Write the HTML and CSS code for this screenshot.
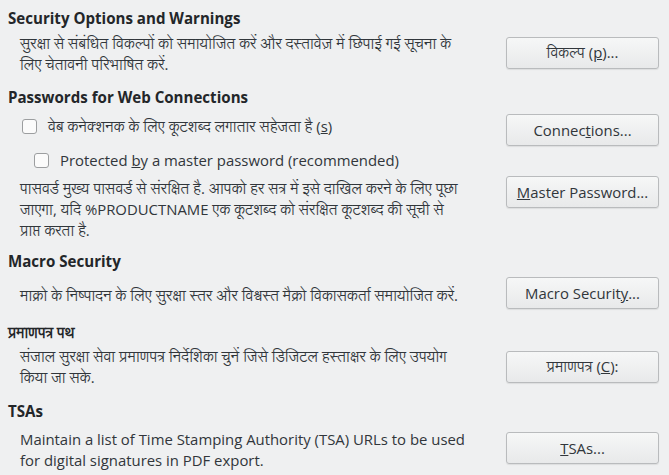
FILE: index.html
```html
<!DOCTYPE html>
<html lang="hi">
<head>
<meta charset="utf-8">
<link rel="stylesheet" href="styles.css">
</head>
<body>
<div class="page">
  <div class="heading h-first">Security Options and Warnings</div>
  <div class="row row-sec">
    <div class="desc">सुरक्षा से संबंधित विकल्पों को समायोजित करें और दस्तावेज़ में छिपाई गई सूचना के<br>लिए चेतावनी परिभाषित करें.</div>
    <button class="btn btn-sec">विकल्प (<u>p</u>)...</button>
  </div>

  <div class="heading h-pass">Passwords for Web Connections</div>
  <div class="row row-check1">
    <label class="check check-1"><span class="box"></span><span class="check-text">वेब कनेक्शनक के लिए कूटशब्द लगातार सहेजता है (<u>s</u>)</span></label>
    <button class="btn">Connec<u>t</u>ions...</button>
  </div>
  <div class="row row-check2">
    <label class="check check-2"><span class="box"></span><span class="check-text">Protected <u>b</u>y a master password (recommended)</span></label>
  </div>
  <div class="row row-master">
    <div class="desc desc-master">पासवर्ड मुख्य पासवर्ड से संरक्षित है. आपको हर सत्र में इसे दाखिल करने के लिए पूछा<br>जाएगा, यदि %PRODUCTNAME एक कूटशब्द को संरक्षित कूटशब्द की सूची से<br>प्राप्त करता है.</div>
    <button class="btn"><u>M</u>aster Password...</button>
  </div>

  <div class="heading h-macro">Macro Security</div>
  <div class="row row-macro">
    <div class="desc desc-macro">माक्रो के निष्पादन के लिए सुरक्षा स्तर और विश्वस्त मैक्रो विकासकर्ता समायोजित करें.</div>
    <button class="btn">Macro Securit<u>y</u>...</button>
  </div>

  <div class="heading heading-hi h-cert">प्रमाणपत्र पथ</div>
  <div class="row row-cert">
    <div class="desc">संजाल सुरक्षा सेवा प्रमाणपत्र निर्देशिका चुनें जिसे डिजिटल हस्ताक्षर के लिए उपयोग<br>किया जा सके.</div>
    <button class="btn">प्रमाणपत्र (<u>C</u>):</button>
  </div>

  <div class="heading h-tsa">TSAs</div>
  <div class="row row-tsa">
    <div class="desc desc-tsa">Maintain a list of Time Stamping Authority (TSA) URLs to be used<br>for digital signatures in PDF export.</div>
    <button class="btn"><u>T</u>SAs...</button>
  </div>
</div>
</body>
</html>
```

FILE: styles.css
```css
html, body {
  margin: 0;
  padding: 0;
  background: #eff0f1;
}
body {
  font-family: "Open Sans", "Lohit Devanagari", "Noto Sans Devanagari", sans-serif;
  font-size: 14.9px;
  color: #31363b;
  width: 669px;
  height: 475px;
  overflow: hidden;
}
.page {
  padding-top: 8px;
  display: flex;
  flex-direction: column;
}
.heading {
  margin-left: 8px;
  font-weight: bold;
  font-size: 15.1px;
  line-height: 20px;
  height: 20px;
  color: #232629;
}
.heading-hi {
  font-size: 14.67px;
}
.h-first { margin-top: 0; }
.h-pass { margin-top: 12px; }
.h-macro { margin-top: 10px; }
.h-cert { margin-top: 13px; }
.h-tsa { margin-top: 13px; }

.row {
  display: flex;
  align-items: center;
  justify-content: space-between;
  padding-left: 20px;
  padding-right: 10px;
}
.desc {
  line-height: 21px;
  white-space: nowrap;
}
.btn {
  flex: none;
  width: 153px;
  height: 32px;
  margin: 0;
  padding: 0;
  border: 1px solid #b9bbbd;
  border-radius: 3px;
  background: linear-gradient(#f6f7f7, #e8e9ea);
  box-shadow: 0 1px 1px rgba(0,0,0,0.08);
  font-family: inherit;
  font-size: 14.9px;
  color: #31363b;
  text-align: center;
}
.row-sec { margin-top: 5px; align-items: flex-start; }
.btn-sec { margin-top: 4px; }

.row-check1 { margin-top: 6px; height: 33px; }
.row-check1 .check { padding-bottom: 6px; }
.row-check2 { margin-top: 4px; height: 21px; }
.check {
  display: flex;
  align-items: center;
  line-height: 21px;
}
.check-1 { margin-left: 2px; }
.check-2 { margin-left: 14px; }
.box {
  width: 13px;
  height: 13px;
  border: 1px solid #9c9ea0;
  border-radius: 3px;
  background: #fbfbfb;
  margin-right: 11px;
}
.check-text { white-space: nowrap; }

.row-master { margin-top: 5px; align-items: flex-start; }
.desc-master { padding-top: 2px; }

.row-macro { margin-top: 6px; height: 32px; }
.desc-macro { padding-top: 4px; }

.row-cert { margin-top: 4px; height: 42px; }
.row-tsa { margin-top: 6px; height: 42px; }
.desc-tsa { padding-top: 4px; }
```
